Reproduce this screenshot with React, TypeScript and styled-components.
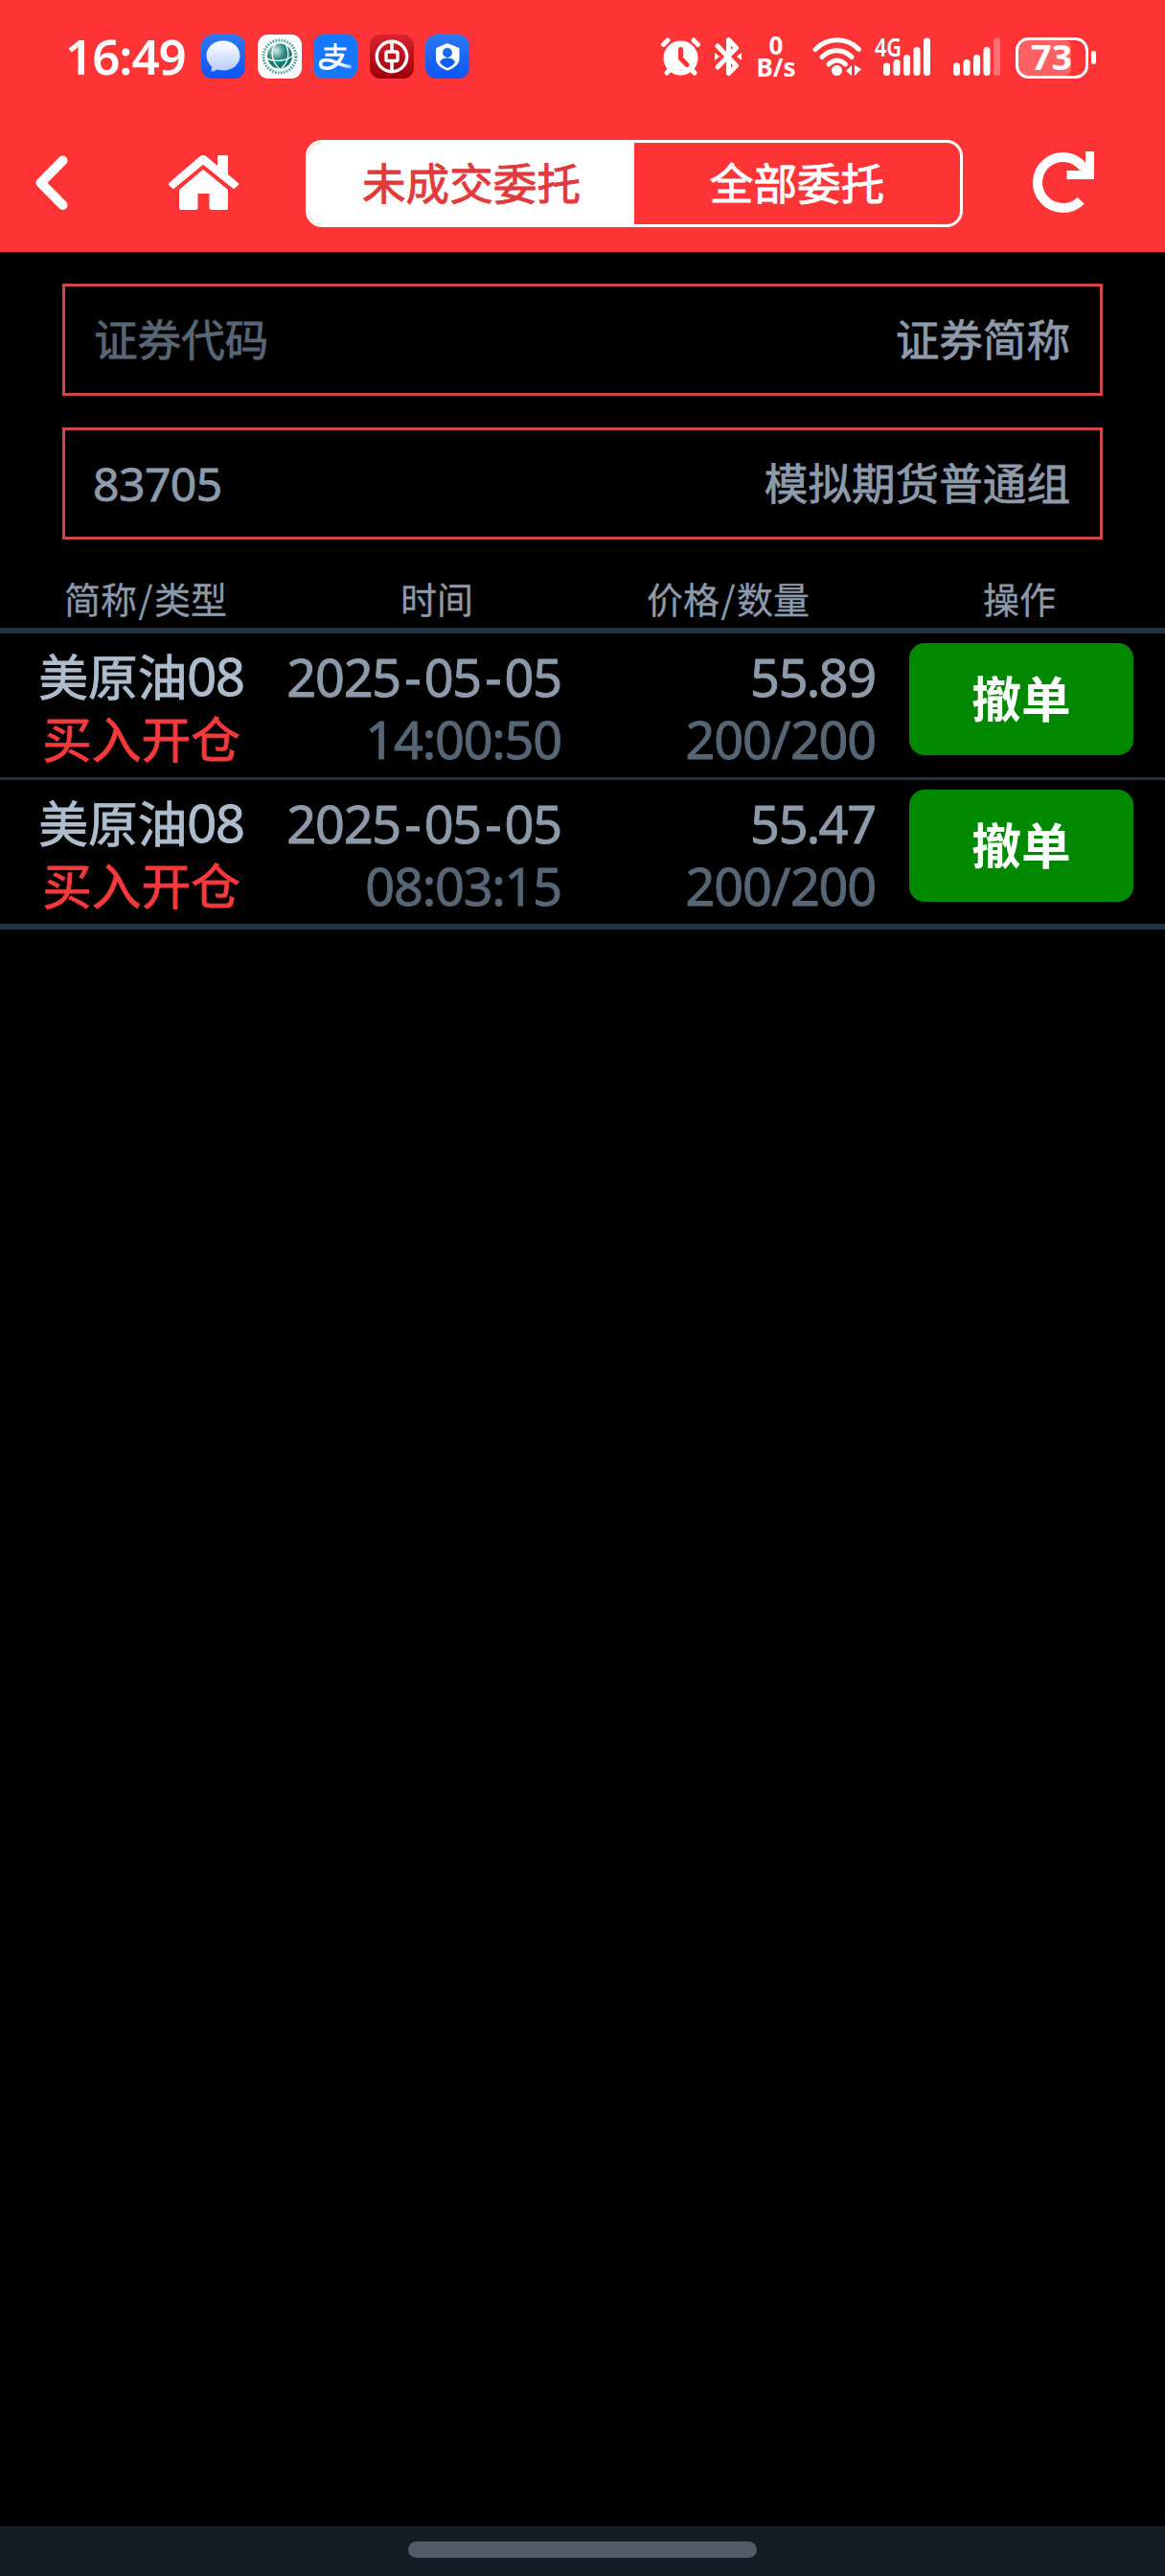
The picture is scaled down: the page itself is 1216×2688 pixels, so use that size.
import React from 'react';
import styled, { createGlobalStyle } from 'styled-components';

const cjk = '"Noto Sans CJK SC", sans-serif';
const latin = '"Noto Sans", "Noto Sans CJK SC", sans-serif';

const GlobalStyle = createGlobalStyle`
  * { box-sizing: border-box; }
  body { margin: 0; background: #000; font-family: ${cjk}; }
  button { font: inherit; border: 0; background: none; padding: 0; margin: 0; cursor: pointer; }
  svg { overflow: visible; }
`;

const Screen = styled.div`
  display: flex;
  flex-direction: column;
  width: 1216px;
  height: 2688px;
  background: #000;
  overflow: hidden;
`;

const TopArea = styled.header`
  height: 263px;
  background: #ff3436;
  color: #fff;
`;

const StatusBar = styled.div`
  display: flex;
  justify-content: space-between;
  height: 120px;
  padding: 36px 71px 0 68px;
`;

const StatusGroup = styled.div`
  display: flex;
  align-items: flex-start;
  height: 46px;
`;

const Clock = styled.span`
  width: 142px;
  font: 600 51px/44px ${latin};
  letter-spacing: -1px;
  white-space: nowrap;
`;

const AppIcons = styled.div`
  display: flex;
  gap: 12.5px;
  svg { display: block; width: 46px; height: 46px; }
`;

const StatusIcon = styled.svg<{ $w: number; $ml?: number }>`
  display: block;
  flex: none;
  width: ${p => p.$w}px;
  height: 46px;
  margin-left: ${p => p.$ml ?? 0}px;
`;

const NetSpeed = styled.div`
  display: flex;
  flex-direction: column;
  align-items: center;
  width: 42px;
  margin-left: 15px;
  font: 700 26px/23px ${latin};
`;

const NavBar = styled.nav`
  display: flex;
  align-items: center;
  height: 143px;
  padding: 0 72px 0 36px;
`;

const NavButton = styled.button<{ $w: number; $ml?: number }>`
  display: block;
  flex: none;
  width: ${p => p.$w}px;
  height: 64px;
  margin-left: ${p => p.$ml ?? 0}px;
  margin-bottom: 3px;
  color: #fff;
  svg { display: block; }
`;

const Segmented = styled.div`
  display: flex;
  width: 688px;
  height: 91px;
  margin-left: 70px;
  border: 3px solid #fff;
  border-radius: 17px;
  overflow: hidden;
`;

const Segment = styled.button<{ $active?: boolean }>`
  flex: 1;
  padding-bottom: 5px;
  font: 400 45.6px/80px ${cjk};
  -webkit-text-stroke: 0.9px currentColor;
  color: ${p => (p.$active ? '#e23a3c' : '#fff')};
  background: ${p => (p.$active ? '#fff' : 'transparent')};
`;

const Filters = styled.section`
  display: flex;
  flex-direction: column;
  gap: 33px;
  padding: 33px 65px 0;
`;

const Field = styled.div`
  display: flex;
  align-items: center;
  justify-content: space-between;
  height: 117px;
  padding: 0 31px 5px 30px;
  border: 3px solid #d14647;
  font: 400 45.6px/66px ${cjk};
  color: #8c9aaa;
  -webkit-text-stroke: 0.8px currentColor;
`;

const Placeholder = styled.span`
  color: #576675;
`;

const Code = styled.span`
  padding: 5px 0 0 0;
  margin-left: -1px;
  font: 400 48px/66px ${latin};
  letter-spacing: -0.5px;
`;

const TableHead = styled.div`
  display: grid;
  grid-template-columns: repeat(4, 1fr);
  height: 98px;
  padding-top: 33px;
  border-bottom: 6px solid #233241;
  font: 400 38px/56px ${cjk};
  text-align: center;
  color: #8c9aaa;
  -webkit-text-stroke: 0.3px currentColor;
`;

const Slash = styled.span`
  margin: 0 1.5px;
`;

const Rows = styled.div`
  border-bottom: 6px solid #233241;
`;

const Row = styled.div`
  display: grid;
  grid-template-columns: 295px 291px 328px 1fr;
  height: 150px;
  padding-top: 10px;
  & + & { border-top: 3px solid #233241; height: 153px; }
`;

const Cell = styled.div<{ $align: string; $top: number }>`
  display: flex;
  flex-direction: column;
  align-items: ${p => p.$align};
  padding-top: ${p => p.$top}px;
  font: 400 51.7px/65px ${cjk};
  white-space: nowrap;
  -webkit-text-stroke: 0.9px currentColor;
`;

const Line = styled.div<{ $color: string }>`
  height: 65px;
  color: ${p => p.$color};
`;

const Num = styled.span`
  font-family: ${latin};
  font-size: 54px;
  line-height: 65px;
  letter-spacing: -1.2px;
`;

const Mark = styled.span<{ $gap: number }>`
  margin: 0 ${p => p.$gap}px;
`;

const CancelButton = styled.button`
  width: 234px;
  height: 117px;
  margin-left: 35px;
  padding-bottom: 5px;
  border-radius: 16px;
  background: #008800;
  color: #fff;
  font: 700 51.7px/112px ${cjk};
`;

const Spacer = styled.main`
  flex: 1;
`;

const GestureBar = styled.footer`
  display: flex;
  justify-content: center;
  height: 52px;
  padding-top: 16px;
  background: #151c26;
`;

const Pill = styled.div`
  width: 364px;
  height: 17px;
  border-radius: 9px;
  background: #545b67;
`;

const BatteryText = styled.text`
  font: 700 36px ${latin};
`;

const NetworkText = styled.text`
  font: 600 27px ${latin};
`;

const markGap: Record<string, number> = { '-': 4.2, ':': 0, '/': 0.7, '.': -0.5 };

function Figures({ value }: { value: string }) {
  return (
    <Num>
      {value.split(/([-:/.])/).map((part, i) =>
        part in markGap ? <Mark key={i} $gap={markGap[part]}>{part}</Mark> : part,
      )}
    </Num>
  );
}

function AppBadges() {
  return (
    <AppIcons>
      <svg viewBox="0 0 46 46">
        <defs>
          <linearGradient id="blue" x1="0" y1="0" x2="0" y2="1">
            <stop offset="0" stopColor="#2f78f2" />
            <stop offset="1" stopColor="#0a55f6" />
          </linearGradient>
          <linearGradient id="bubble" x1="0" y1="0" x2="0" y2="1">
            <stop offset="0" stopColor="#fff" />
            <stop offset="1" stopColor="#b5cbff" />
          </linearGradient>
        </defs>
        <rect width="46" height="46" rx="12" fill="url(#blue)" />
        <path d="M23 6.500C13 6.500 5.500 13 5.500 22c0 4.500 2 8.500 5.500 11.500.2 2-.3 3.700-1 5.200 3-.2 5-1 6.500-2.100 2 .6 4 .9 6.500.9 10 0 17.500-6.500 17.500-15.500S33 6.500 23 6.500z" fill="url(#bubble)" />
      </svg>
      <svg viewBox="0 0 46 46">
        <defs>
          <radialGradient id="globe" cx=".35" cy=".28" r=".75">
            <stop offset="0" stopColor="#d8ebe9" />
            <stop offset=".5" stopColor="#23857d" />
            <stop offset="1" stopColor="#00746b" />
          </radialGradient>
        </defs>
        <rect width="46" height="46" rx="11" fill="#fff" />
        <circle cx="23" cy="23" r="17" fill="none" stroke="#5aa19c" strokeWidth="3" strokeDasharray="1.700 1.300" />
        <circle cx="23" cy="22.500" r="13" fill="url(#globe)" />
        <path d="M9.500 25c8 4 20 3 27-3M19 9c-6 8-5 19 4 27M29 10c5 9 3 19-4 25" fill="none" stroke="#fff" strokeWidth="1.400" />
      </svg>
      <svg viewBox="0 0 46 46">
        <defs>
          <linearGradient id="tail" x1="0" y1="0" x2="1" y2="0">
            <stop offset=".7" stopColor="#fff" />
            <stop offset="1" stopColor="#fff" stopOpacity=".5" />
          </linearGradient>
        </defs>
        <rect width="46" height="46" rx="11" fill="#1677ff" />
        <path d="M11.500 15H34.500M23 9V22M12.500 21.300H32" fill="none" stroke="#fff" strokeWidth="3" />
        <path d="M31 20.500c-3 8.500-9.500 14.700-17 14.700-4.500 0-6.500-1.700-6.500-4.400 0-3 3-4.300 6.500-4.300 7.500 0 13 6 25.500 7.300" fill="none" stroke="url(#tail)" strokeWidth="3.600" />
      </svg>
      <svg viewBox="0 0 46 46">
        <defs>
          <linearGradient id="bank" x1="0" y1="0" x2="0" y2="1">
            <stop offset="0" stopColor="#d9232f" />
            <stop offset="1" stopColor="#9d0009" />
          </linearGradient>
        </defs>
        <rect width="46" height="46" rx="11" fill="url(#bank)" />
        <g fill="none" stroke="#fff">
          <circle cx="23" cy="23" r="15.700" strokeWidth="3.400" />
          <rect x="17" y="18" width="12" height="9.500" rx="1.500" strokeWidth="3.400" />
          <path d="M23 7v10M23 28.500v10" strokeWidth="3.600" />
        </g>
      </svg>
      <svg viewBox="0 0 46 46">
        <rect width="46" height="46" rx="12" fill="url(#blue)" />
        <path d="M22 9.500q1-.6 2 0l10.500 4.300q1 .4 1 1.500V25c0 6-5.500 10-11.500 12.300q-1 .4-2 0C16 35 11 31 11 25v-9.700q0-1.100 1-1.500z" fill="#fff" />
        <circle cx="23" cy="19" r="5" fill="#1767f5" />
        <path d="M15 29c1.500-3.500 4.500-4.500 8-4.500s6.500 1 8 4.500c-1.500 2.500-4.500 4.500-8 6-3.500-1.500-6.500-3.500-8-6z" fill="#0f5ef5" />
      </svg>
    </AppIcons>
  );
}

function Signal({ dim }: { dim?: boolean }) {
  const tops = [29.5, 26, 21, 13, 3.5];
  return (
    <g>
      {tops.map((y, i) => (
        <rect key={i} x={i * 10.5} y={y} width="7" height={43 - y} rx="3.5" fill="#fff" opacity={dim && i === 4 ? 0.3 : 1} />
      ))}
    </g>
  );
}

function HeadLabel({ text }: { text: string }) {
  const [first, second] = text.split('/');
  return <span>{first}{second && <><Slash>/</Slash>{second}</>}</span>;
}

const columns = ['简称/类型', '时间', '价格/数量', '操作'];

const orders = [
  { name: '美原油', suffix: '08', side: '买入开仓', date: '2025-05-05', time: '14:00:50', price: '55.89', qty: '200/200' },
  { name: '美原油', suffix: '08', side: '买入开仓', date: '2025-05-05', time: '08:03:15', price: '55.47', qty: '200/200' },
];

export default function App() {
  return (
    <Screen>
      <GlobalStyle />
      <TopArea>
        <StatusBar>
          <StatusGroup>
            <Clock>16:49</Clock>
            <AppBadges />
          </StatusGroup>
          <StatusGroup>
            <StatusIcon $w={42} viewBox="0 0 42 46">
              <g fill="none" stroke="#fff" strokeWidth="5" strokeLinecap="round">
                <path d="M2.500 10.500L7 6M38.500 10.500L34 6M6 40l5-5M35 40l-5-5" />
              </g>
              <circle cx="20.500" cy="24.500" r="18" fill="#fff" />
              <path d="M20.500 15.500V25L27 31.500" fill="none" stroke="#ff3436" strokeWidth="5" strokeLinecap="round" strokeLinejoin="round" />
            </StatusIcon>
            <StatusIcon $w={28} $ml={14} viewBox="0 0 28 46">
              <path d="M3 12L22.500 32.500 14.500 40.500V5.500L22.500 14 3 34" fill="none" stroke="#fff" strokeWidth="5" strokeLinecap="round" strokeLinejoin="round" />
              <path d="M0 19l5 4-5 4zM28 19l-5 4 5 4z" fill="#fff" />
            </StatusIcon>
            <NetSpeed><span>0</span><span>B/s</span></NetSpeed>
            <StatusIcon $w={52} $ml={17} viewBox="0 0 52 46">
              <g fill="none" stroke="#fff" strokeWidth="5" strokeLinecap="round">
                <path d="M3 15.500C16 2.500 36 2.500 48.500 15.500M10 23.500C19 14.500 32 14.500 41 23.500M17 31c5.500-5.500 12-5.500 17.500 0" />
              </g>
              <circle cx="25.500" cy="37.500" r="5.500" fill="#fff" />
              <path d="M41 32v11L35 38zM44 43V32l7 4z" fill="#fff" />
            </StatusIcon>
            <StatusIcon $w={60} $ml={12} viewBox="0 0 60 46">
              <NetworkText x="1" y="23" fill="#fff" textLength="28" lengthAdjust="spacingAndGlyphs">4G</NetworkText>
              <g transform="translate(10 0)"><Signal /></g>
            </StatusIcon>
            <StatusIcon $w={50} $ml={23} viewBox="0 0 50 46"><Signal dim /></StatusIcon>
            <StatusIcon $w={85} $ml={15} viewBox="0 0 85 46">
              <rect x="3" y="6" width="55" height="37" rx="7" fill="#fff" opacity=".22" />
              <rect x="1.500" y="4.500" width="73" height="40" rx="12" fill="none" stroke="#fff" strokeWidth="3" />
              <rect x="79" y="17" width="5" height="14" rx="2.500" fill="#fff" />
              <BatteryText x="16" y="37" fill="#fff" textLength="43" lengthAdjust="spacingAndGlyphs">73</BatteryText>
            </StatusIcon>
          </StatusGroup>
        </StatusBar>
        <NavBar>
          <NavButton $w={36} aria-label="返回">
            <svg width="36" height="64" viewBox="0 0 36 64">
              <path d="M29.500 9.500L6.500 32.700 29.500 56" fill="none" stroke="#fff" strokeWidth="10" strokeLinejoin="round" strokeLinecap="round" />
            </svg>
          </NavButton>
          <NavButton $w={74} $ml={103} aria-label="首页">
            <svg width="74" height="64" viewBox="0 0 74 64">
              <path d="M37 18.700L63 40V59q0 2-2 2H45.500q-2 0-2-2V44h-12V59q0 2-2 2H14q-2 0-2-2V40z" fill="#fff" />
              <path d="M33.500 5.200q3.500-2.500 7 0L52 15V5.500q0-1.500 1.500-1.500h8q1.500 0 1.500 1.500V24L73.500 32.700q1.500 1 0 2.800L70 38.500q-1 1-2 0L37 13.700 7 38.500q-1 1-2 0L1.500 35.500q-1.500-1.500 0-2.800z" fill="#fff" />
            </svg>
          </NavButton>
          <Segmented>
            <Segment $active>未成交委托</Segment>
            <Segment>全部委托</Segment>
          </Segmented>
          <NavButton $w={66} $ml={73} aria-label="刷新">
            <svg width="66" height="64" viewBox="0 0 66 64">
              <path d="M50.200 51.200A26.500 26.500 0 1 1 53 17" fill="none" stroke="#fff" strokeWidth="10" />
              <path d="M55 0h9v29H35.500v-9h14.500l5-7z" fill="#fff" />
            </svg>
          </NavButton>
        </NavBar>
      </TopArea>
      <Filters>
        <Field><Placeholder>证券代码</Placeholder><span>证券简称</span></Field>
        <Field><Code>83705</Code><span>模拟期货普通组</span></Field>
      </Filters>
      <TableHead>
        {columns.map(c => <HeadLabel key={c} text={c} />)}
      </TableHead>
      <Rows>
        {orders.map(o => (
          <Row key={o.time}>
            <Cell $align="center" $top={0}>
              <Line $color="#adbdcd">{o.name}<Num>{o.suffix}</Num></Line>
              <Line $color="#f53a3c">{o.side}</Line>
            </Cell>
            <Cell $align="flex-end" $top={1}>
              <Line $color="#8c9aaa"><Figures value={o.date} /></Line>
              <Line $color="#576675"><Figures value={o.time} /></Line>
            </Cell>
            <Cell $align="flex-end" $top={1}>
              <Line $color="#8c9aaa"><Figures value={o.price} /></Line>
              <Line $color="#576675"><Figures value={o.qty} /></Line>
            </Cell>
            <CancelButton>撤单</CancelButton>
          </Row>
        ))}
      </Rows>
      <Spacer />
      <GestureBar><Pill /></GestureBar>
    </Screen>
  );
}
